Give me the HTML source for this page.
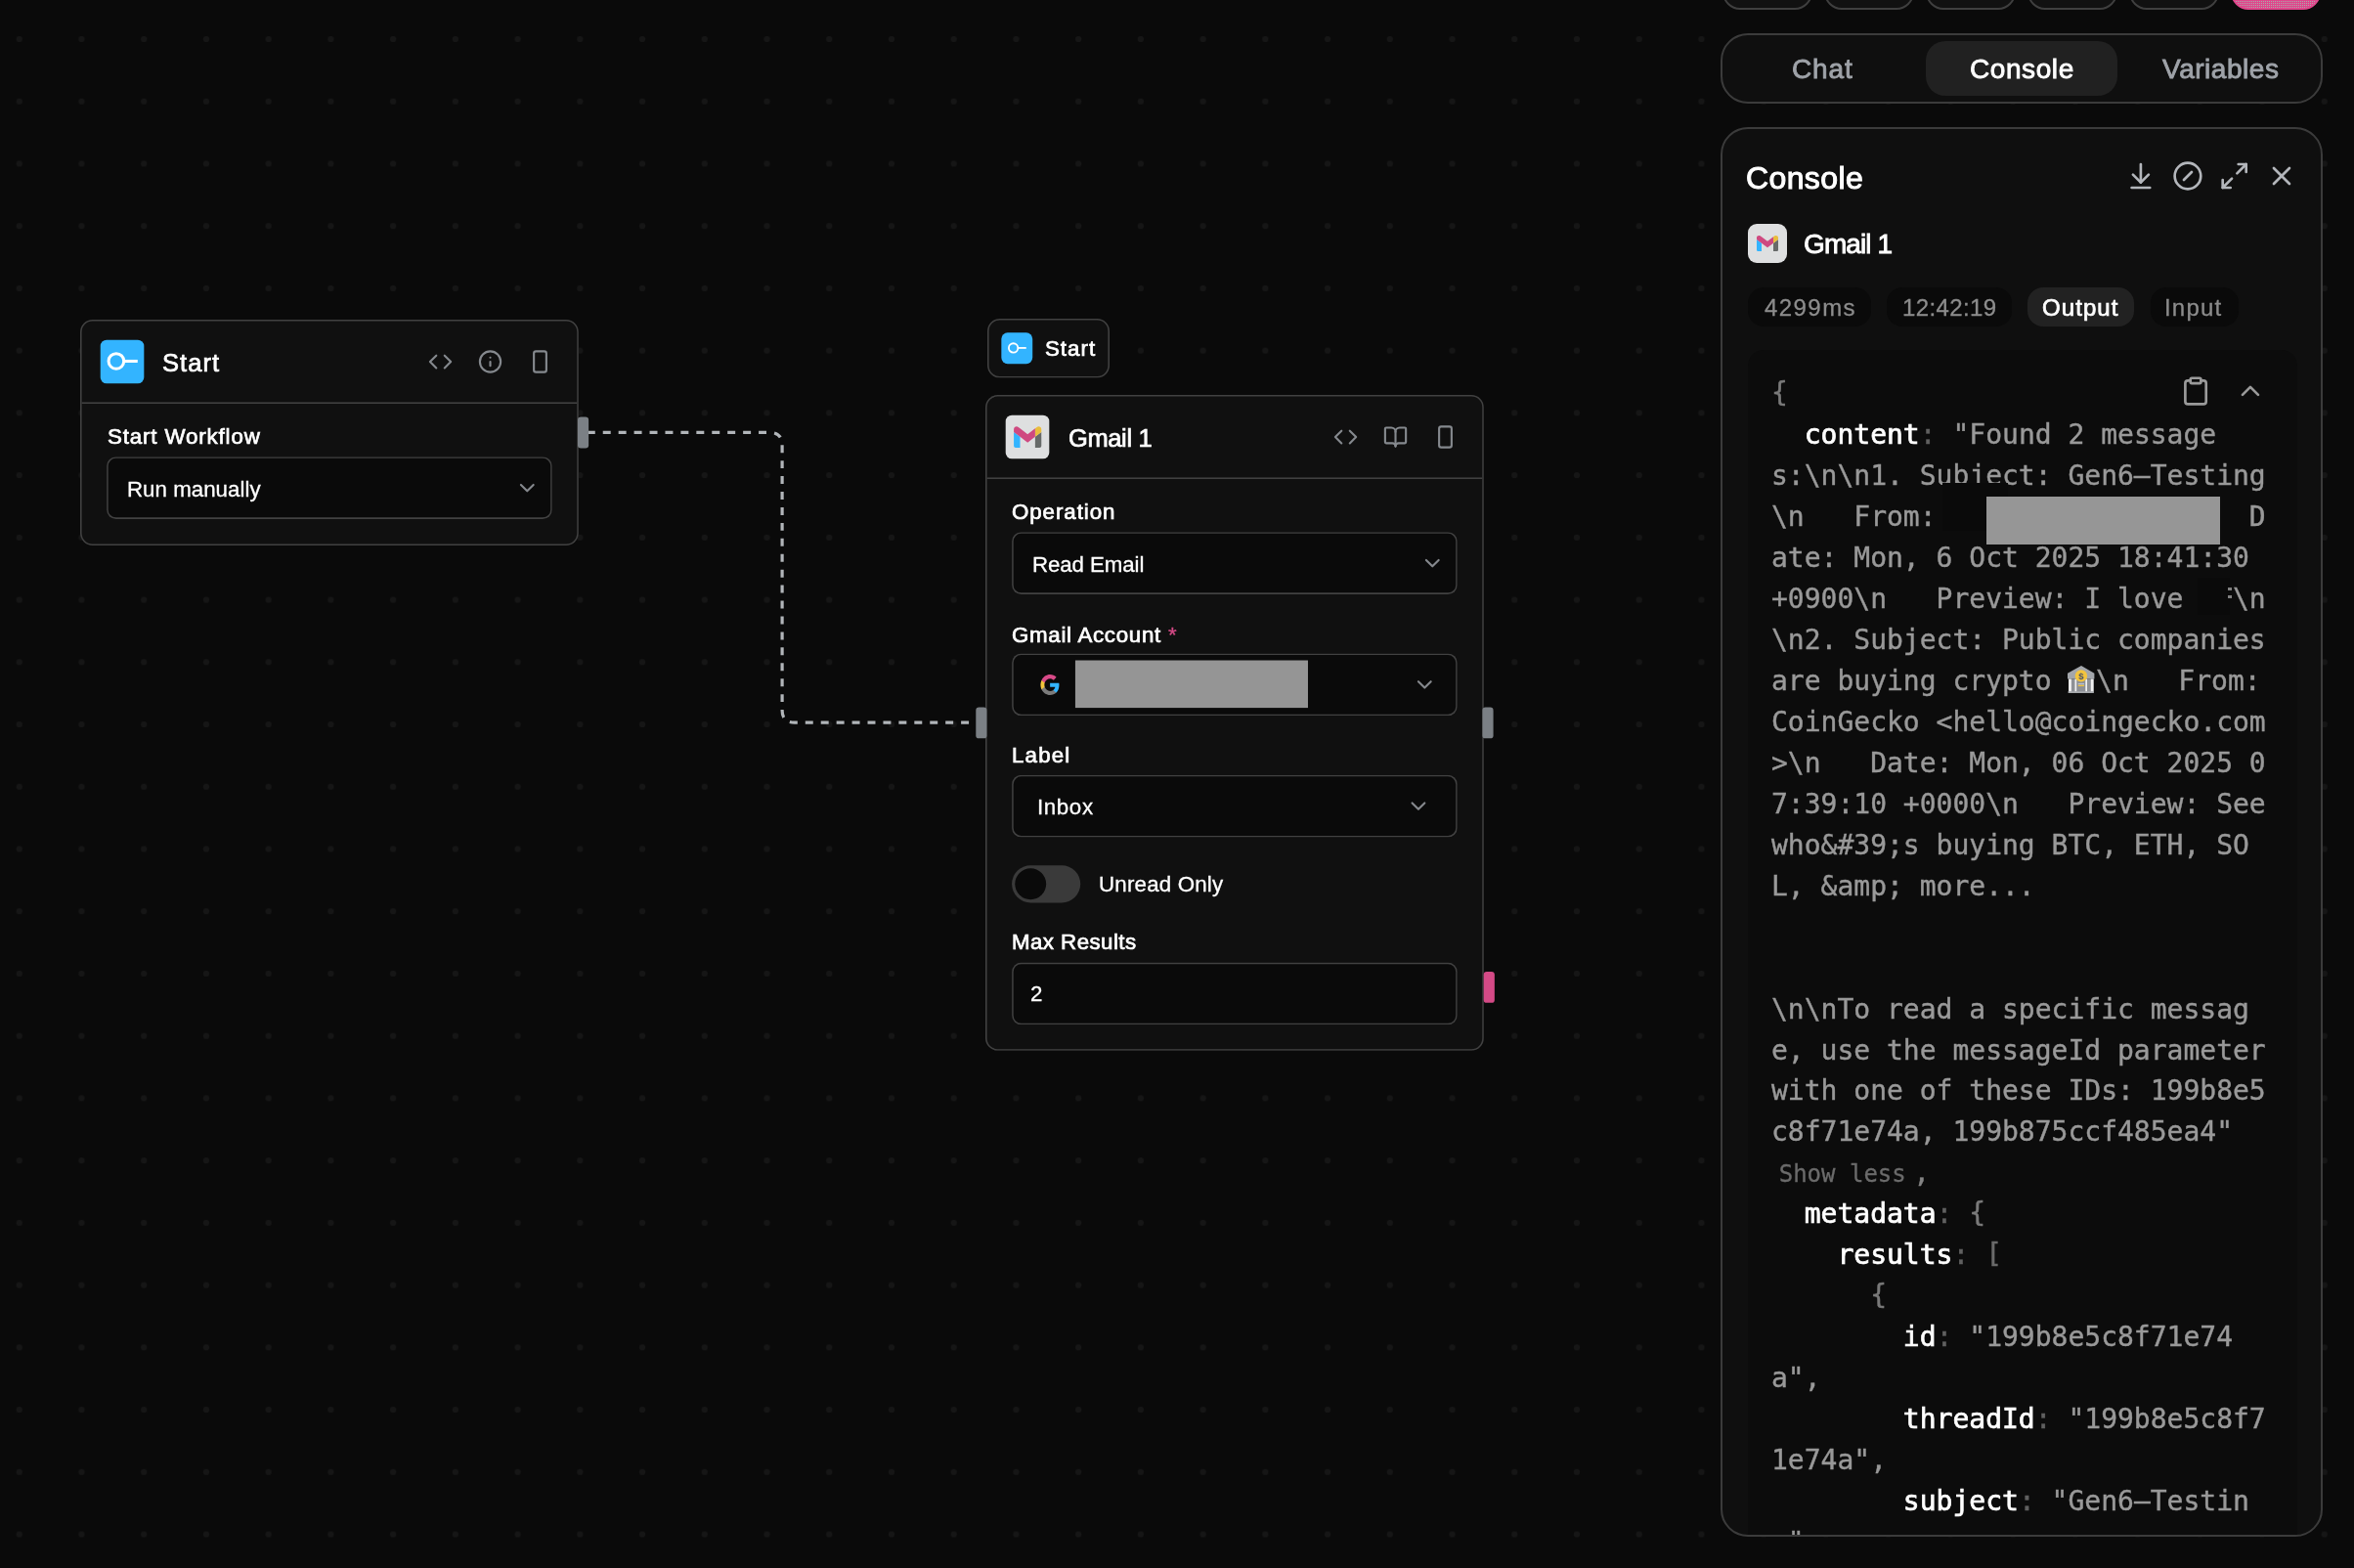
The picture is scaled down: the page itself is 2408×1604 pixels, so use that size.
<!DOCTYPE html>
<html lang="en"><head><meta charset="utf-8"><title>Workflow</title>
<style>
html,body{margin:0;padding:0;background:#0a0a0a;}
body{width:2408px;height:1604px;overflow:hidden;position:relative;font-family:"Liberation Sans", Arial, sans-serif;}
.t{position:absolute;white-space:pre;line-height:1;will-change:transform;font-family:"Liberation Sans", Arial, sans-serif;font-weight:400;}
.ic{position:absolute;overflow:visible}
.node{position:absolute;transform-origin:0 0;transform:scale(1.5933);}
.card{position:absolute;left:0;top:0;right:0;bottom:0;background:#101010;box-shadow:inset 0 0 0 1px #414141;}
.ibox{position:absolute;border-radius:4px;}
.divider{position:absolute;left:1px;right:1px;top:53px;height:1px;background:#414141;}
.sel{position:absolute;width:286px;border-radius:6px;background:#0a0a0a;box-shadow:inset 0 0 0 1px #414141;}
.handle{position:absolute;width:7px;height:20px;border-radius:2px;background:#7b8085;}
.toggle{position:absolute;left:17px;top:302px;width:44px;height:24px;border-radius:12px;background:#3a3a3a;}
.knob{position:absolute;left:2px;top:2px;width:20px;height:20px;border-radius:10px;background:#0a0a0a;}
.tbtn{position:absolute;top:-78px;width:91.5px;height:88px;box-sizing:border-box;border:2px solid #3f3f3f;border-radius:18px;background:#111111;}
.dith{position:absolute;left:0;right:0;top:0;bottom:0;border-radius:15px;background-color:#aaaaaa;background-image:linear-gradient(to right,#e0468c 50%,transparent 50%),linear-gradient(to bottom,#e0468c 50%,transparent 50%);background-size:2px 2px;}
.tabs{position:absolute;left:1760px;top:34px;width:616px;height:72px;box-sizing:border-box;border:2px solid #3b3b3b;border-radius:28px;background:#0f0f0f;}
.tabact{position:absolute;left:1970px;top:42px;width:196px;height:56px;border-radius:20px;background:#212121;}
.panel{position:absolute;left:1760px;top:130px;width:616px;height:1442px;box-sizing:border-box;border:2px solid #3b3b3b;border-radius:28px;background:#0f0f0f;overflow:hidden;}
.panel > *{margin:-2px 0 0 -2px;}
.pill{position:absolute;top:164px;height:40px;border-radius:16px;background:#0a0a0a;}
.codeblk{position:absolute;left:28px;top:228px;width:562px;height:1300px;border-radius:16px;background:#0c0c0c;font-family:"DejaVu Sans Mono", "Liberation Mono", monospace;font-size:28px;color:#999;-webkit-text-stroke:0.4px #999;}
.ln{will-change:transform;position:absolute;left:23.6px;height:42px;line-height:42px;white-space:pre;}
.k{color:#fff;-webkit-text-stroke:0.7px #fff;}
.c{color:#606060;-webkit-text-stroke:0.4px #606060;}
.b{color:#7a7a7a;-webkit-text-stroke:0.4px #7a7a7a;position:relative;top:-1.4px;}
.b2{color:#6a6a6a;-webkit-text-stroke:0.4px #6a6a6a;position:relative;top:-1.4px;}
.sl{font-size:24px;color:#6b6b6b;-webkit-text-stroke:0.3px #6b6b6b;margin-left:7.7px;}
.slc{color:#858585;-webkit-text-stroke:0.4px #858585;margin-left:7.5px;}
.emo{display:inline-block;position:relative;width:28.6px;height:1px;}
</style></head>
<body>
<svg style="position:absolute;left:0;top:0" width="2408" height="1604"><defs><pattern id="dp" x="-12.115" y="8.135" width="63.73" height="63.73" patternUnits="userSpaceOnUse"><circle cx="31.865" cy="31.865" r="3.1" fill="#161616"/></pattern></defs><rect width="2408" height="1604" fill="url(#dp)"/></svg>
<svg style="position:absolute;left:0;top:0" width="2408" height="1604" fill="none"><path d="M600.8 442.45 L787.35 442.45 Q800.1 442.45 800.1 455.2 L800.1 726.45 Q800.1 739.2 812.85 739.2 L999 739.2" stroke="#b1b5b9" stroke-width="3.19" stroke-dasharray="7.9665 7.9665"/></svg>
<div class="node" style="left:82.15px;top:327.0px;width:320px;height:145px;"><div class="card" style="border-radius:8px;"></div><div class="ibox" style="left:13px;top:13px;width:28px;height:28px;background:#33b4ff"><svg class="ic" style="left:0;top:0;transform:translate(4.000px,4.000px);" width="20" height="20" viewBox="0 0 20 20" fill="none" stroke="#fff" stroke-width="1.9" stroke-linecap="butt"><circle cx="6.15" cy="9.65" r="4.9"/><path d="M11 9.65H19.9"/></svg></div><svg class="ic" style="left:0;top:0;transform:translate(223.300px,19.000px);" width="16" height="16" viewBox="0 0 24 24" fill="none" stroke="#85898e" stroke-width="2" stroke-linecap="round" stroke-linejoin="round"><polyline points="16 18 22 12 16 6"/><polyline points="8 6 2 12 8 18"/></svg><svg class="ic" style="left:0;top:0;transform:translate(255.300px,19.000px);" width="16" height="16" viewBox="0 0 24 24" fill="none" stroke="#85898e" stroke-width="2" stroke-linecap="round" stroke-linejoin="round"><circle cx="12" cy="12" r="10"/><path d="M12 16v-4"/><path d="M12 8h.01"/></svg><svg class="ic" style="left:0;top:0;transform:translate(287.300px,19.000px);" width="16" height="16" viewBox="0 0 24 24" fill="none" stroke="#85898e" stroke-width="2" stroke-linecap="round" stroke-linejoin="round"><rect width="12" height="20" x="6" y="2" rx="2"/></svg><div class="divider"></div><div class="sel" style="left:0;top:0;transform:translate(17.000px,88.000px);height:40px"></div><svg class="ic" style="left:0;top:0;transform:translate(279.000px,100.000px);" width="16" height="16" viewBox="0 0 24 24" fill="none" stroke="#85888d" stroke-width="2" stroke-linecap="round" stroke-linejoin="round"><path d="m6 9 6 6 6-6"/></svg><div class="handle" style="left:0;top:0;transform:translate(319.450px,62.500px);"></div></div>
<div class="node" style="left:1009.6px;top:325.9px;width:78.45px;height:38px;"><div class="card" style="border-radius:8px;width:79px;right:auto;transform-origin:0 0;transform:scaleX(0.99304);"></div><div class="ibox" style="left:9px;top:9px;width:20px;height:20px;background:#33b4ff"><svg class="ic" style="left:0;top:0;transform:translate(4.000px,4.000px);" width="12" height="12" viewBox="0 0 20 20" fill="none" stroke="#fff" stroke-width="1.9" stroke-linecap="butt"><circle cx="6.15" cy="9.65" r="4.9"/><path d="M11 9.65H19.9"/></svg></div></div>
<div class="node" style="left:1008.15px;top:403.8px;width:320px;height:421px;"><div class="card" style="border-radius:8px;"></div><div class="ibox" style="left:13px;top:13px;width:28px;height:28px;background:#dedfe0"><svg class="ic" style="left:0;top:0;transform:translate(5.250px,7.300px);" width="18" height="14" viewBox="0 0 18 14"><g transform="scale(0.20114,0.20606) translate(-52,-42)"><path fill="#33b4ff" d="M58 108h14V74L52 59v43c0 3.32 2.69 6 6 6"/><path fill="#676a69" d="M120 108h14c3.32 0 6-2.69 6-6V59l-20 15"/><path fill="#e9bd3d" d="M120 48v26l20-15v-8c0-7.42-8.47-11.65-14.4-7.2"/><path fill="#cf4980" d="M72 74V48l24 18 24-18v26L96 92zM52 51v8l20 15V48l-5.6-4.2c-5.94-4.45-14.4-.22-14.4 7.2z"/></g></svg></div><svg class="ic" style="left:0;top:0;transform:translate(223.300px,19.000px);" width="16" height="16" viewBox="0 0 24 24" fill="none" stroke="#85898e" stroke-width="2" stroke-linecap="round" stroke-linejoin="round"><polyline points="16 18 22 12 16 6"/><polyline points="8 6 2 12 8 18"/></svg><svg class="ic" style="left:0;top:0;transform:translate(255.300px,19.000px);" width="16" height="16" viewBox="0 0 24 24" fill="none" stroke="#85898e" stroke-width="2" stroke-linecap="round" stroke-linejoin="round"><path d="M12 7v14"/><path d="M3 18a1 1 0 0 1-1-1V4a1 1 0 0 1 1-1h5a4 4 0 0 1 4 4 4 4 0 0 1 4-4h5a1 1 0 0 1 1 1v13a1 1 0 0 1-1 1h-6a3 3 0 0 0-3 3 3 3 0 0 0-3-3z"/></svg><svg class="ic" style="left:0;top:0;transform:translate(287.300px,19.000px);" width="16" height="16" viewBox="0 0 24 24" fill="none" stroke="#85898e" stroke-width="2" stroke-linecap="round" stroke-linejoin="round"><rect width="12" height="20" x="6" y="2" rx="2"/></svg><div class="divider"></div><div class="sel" style="left:0;top:0;transform:translate(17.000px,88.000px);height:40px"></div><svg class="ic" style="left:0;top:0;transform:translate(279.000px,100.000px);" width="16" height="16" viewBox="0 0 24 24" fill="none" stroke="#85888d" stroke-width="2" stroke-linecap="round" stroke-linejoin="round"><path d="m6 9 6 6 6-6"/></svg><div class="sel" style="left:0;top:0;transform:translate(17.000px,166.000px);height:40px"></div><svg class="ic" style="left:0;top:0;transform:translate(274.000px,178.000px);" width="16" height="16" viewBox="0 0 24 24" fill="none" stroke="#85888d" stroke-width="2" stroke-linecap="round" stroke-linejoin="round"><path d="m6 9 6 6 6-6"/></svg><div class="sel" style="left:0;top:0;transform:translate(17.000px,244.000px);height:40px"></div><svg class="ic" style="left:0;top:0;transform:translate(270.000px,256.000px);" width="16" height="16" viewBox="0 0 24 24" fill="none" stroke="#85888d" stroke-width="2" stroke-linecap="round" stroke-linejoin="round"><path d="m6 9 6 6 6-6"/></svg><div class="sel" style="left:0;top:0;transform:translate(17.000px,364.400px);height:40px"></div><svg class="ic" style="left:0;top:0;transform:translate(34.840px,178.950px);" width="15" height="15" viewBox="0 0 15 15"><g transform="scale(0.55500,0.60000)"><path fill="#33b4ff" d="M22.56 12.25c0-.78-.07-1.53-.2-2.25H12v4.26h5.92c-.26 1.37-1.04 2.53-2.21 3.31v2.77h3.57c2.08-1.92 3.28-4.74 3.28-8.09z"/><path fill="#7b7b7b" d="M12 23c2.97 0 5.46-.98 7.28-2.66l-3.57-2.77c-.98.66-2.23 1.06-3.71 1.06-2.86 0-5.29-1.93-6.16-4.53H2.18v2.84C3.99 20.53 7.7 23 12 23z"/><path fill="#f2c53d" d="M5.84 14.09c-.22-.66-.35-1.36-.35-2.09s.13-1.43.35-2.09V7.07H2.18C1.43 8.55 1 10.22 1 12s.43 3.45 1.18 4.93l2.85-2.22.81-.62z"/><path fill="#d84a88" d="M12 5.38c1.62 0 3.06.56 4.21 1.64l3.15-3.15C17.45 2.09 14.97 1 12 1 7.7 1 3.99 3.47 2.18 7.07l3.66 2.84c.87-2.6 3.3-4.53 6.16-4.53z"/></g></svg><div style="position:absolute;left:0;top:0;width:150px;height:31px;transform-origin:0 0;transform:translate(57.700px,170.400px) scale(0.99600,0.98387);background:#959595"></div><div class="toggle"><div class="knob"></div></div><div class="handle" style="left:0;top:0;transform:translate(-6.100px,200.500px);"></div><div class="handle" style="left:0;top:0;transform:translate(319.100px,200.500px);"></div><div class="handle" style="left:0;top:0;transform:translate(319.900px,370.300px);background:#d44a86"></div></div>
<div class="tbtn" style="left:1762.0px"></div><div class="tbtn" style="left:1866.0px"></div><div class="tbtn" style="left:1970.1px"></div><div class="tbtn" style="left:2074.2px"></div><div class="tbtn" style="left:2178.2px"></div><div class="tbtn" style="left:2282.2px;background:#e0468c;border-color:#e0468c"><div class="dith"></div></div>
<div class="tabs"></div><div class="tabact"></div>
<div class="panel"><svg class="ic" style="left:0;top:0;transform:translate(413.900px,34.000px);" width="32" height="32" viewBox="0 0 24 24" fill="none" stroke="#b3b6bb" stroke-width="2" stroke-linecap="round" stroke-linejoin="round"><path d="M12 17V3"/><path d="m6 11 6 6 6-6"/><path d="M19 21H5"/></svg><svg class="ic" style="left:0;top:0;transform:translate(461.950px,34.000px);" width="32" height="32" viewBox="0 0 24 24" fill="none" stroke="#b3b6bb" stroke-width="2" stroke-linecap="round" stroke-linejoin="round"><circle cx="12" cy="12" r="10"/><path d="m9 15 6-6"/></svg><svg class="ic" style="left:0;top:0;transform:translate(509.700px,34.000px);" width="32" height="32" viewBox="0 0 24 24" fill="none" stroke="#b3b6bb" stroke-width="2" stroke-linecap="round" stroke-linejoin="round"><polyline points="15 3 21 3 21 9"/><polyline points="9 21 3 21 3 15"/><line x1="21" x2="14" y1="3" y2="10"/><line x1="3" x2="10" y1="21" y2="14"/></svg><svg class="ic" style="left:0;top:0;transform:translate(557.950px,34.000px);" width="32" height="32" viewBox="0 0 24 24" fill="none" stroke="#b3b6bb" stroke-width="2" stroke-linecap="round" stroke-linejoin="round"><path d="M18 6 6 18"/><path d="m6 6 12 12"/></svg><div class="ibox" style="left:28px;top:99px;width:40px;height:40px;border-radius:9px;background:#dedfe0"><svg class="ic" style="left:0;top:0;transform:translate(9.000px,11.900px);" width="22" height="17" viewBox="0 0 22 17"><g transform="scale(0.25000,0.24545) translate(-52,-42)"><path fill="#33b4ff" d="M58 108h14V74L52 59v43c0 3.32 2.69 6 6 6"/><path fill="#676a69" d="M120 108h14c3.32 0 6-2.69 6-6V59l-20 15"/><path fill="#e9bd3d" d="M120 48v26l20-15v-8c0-7.42-8.47-11.65-14.4-7.2"/><path fill="#cf4980" d="M72 74V48l24 18 24-18v26L96 92zM52 51v8l20 15V48l-5.6-4.2c-5.94-4.45-14.4-.22-14.4 7.2z"/></g></svg></div><div class="pill" style="left:28px;width:126px"></div><div class="pill" style="left:170px;width:128px"></div><div class="pill" style="left:314.3000000000002px;width:109px;background:#222"></div><div class="pill" style="left:440.3000000000002px;width:89.4px"></div><div class="codeblk"><div class="ln" style="top:23.7px"><span class="b">{</span></div><div class="ln" style="top:65.7px">  <span class="k">content</span><span class="c">:</span> "Found 2 message</div><div class="ln" style="top:107.7px">s:\n\n1. Subject: Gen6–Testing</div><div class="ln" style="top:149.7px">\n   From:                   D</div><div class="ln" style="top:191.6px">ate: Mon, 6 Oct 2025 18:41:30</div><div class="ln" style="top:233.6px">+0900\n   Preview: I love   \n</div><div class="ln" style="top:275.6px">\n2. Subject: Public companies</div><div class="ln" style="top:317.6px">are buying crypto <span class="emo"><svg width="27.4" height="27.9" viewBox="0 0 27.4 27.9" style="position:absolute;left:0;top:-23.7px"><path d="M0 7.7 L14 0 L27.4 7.7 V13.4 H0Z" fill="#a3a6ab"/><rect x="1" y="13.4" width="25.5" height="13" fill="#8e9196"/><rect x="1.1" y="13.6" width="2.8" height="12.9" fill="#f1f1f1"/><rect x="7.5" y="13.6" width="1.7" height="12.9" fill="#f1f1f1"/><rect x="18.3" y="13.6" width="1.7" height="12.9" fill="#f1f1f1"/><rect x="23.8" y="13.6" width="2.8" height="12.9" fill="#f1f1f1"/><rect x="0.6" y="26.2" width="26.3" height="1.7" fill="#b9bcc0"/><circle cx="13.9" cy="10.4" r="6.2" fill="#f2c43e"/><rect x="10.8" y="18" width="6.2" height="1.3" fill="#b9c3d4"/><rect x="10.8" y="19.75" width="6.2" height="1.3" fill="#f2c43e"/><text x="13.9" y="13.6" text-anchor="middle" font-family="Liberation Sans, Arial, sans-serif" font-weight="700" font-size="9.5" fill="#4c5468" stroke="none">$</text></svg></span>\n   From:</div><div class="ln" style="top:359.6px">CoinGecko &lt;hello@coingecko.com</div><div class="ln" style="top:401.6px">&gt;\n   Date: Mon, 06 Oct 2025 0</div><div class="ln" style="top:443.5px">7:39:10 +0000\n   Preview: See</div><div class="ln" style="top:485.5px">who&amp;#39;s buying BTC, ETH, SO</div><div class="ln" style="top:527.5px">L, &amp;amp; more...</div><div class="ln" style="top:569.5px"></div><div class="ln" style="top:611.5px"></div><div class="ln" style="top:653.5px">\n\nTo read a specific messag</div><div class="ln" style="top:695.5px">e, use the messageId parameter</div><div class="ln" style="top:737.4px">with one of these IDs: 199b8e5</div><div class="ln" style="top:779.4px">c8f71e74a, 199b875ccf485ea4"</div><div class="ln" style="top:821.4px"><span class="sl">Show less</span><span class="slc">,</span></div><div class="ln" style="top:863.4px">  <span class="k">metadata</span><span class="c">:</span> <span class="b">{</span></div><div class="ln" style="top:905.4px">    <span class="k">results</span><span class="c">:</span> <span class="b2">[</span></div><div class="ln" style="top:947.4px">      <span class="b">{</span></div><div class="ln" style="top:989.4px">        <span class="k">id</span><span class="c">:</span> "199b8e5c8f71e74</div><div class="ln" style="top:1031.3px">a",</div><div class="ln" style="top:1073.3px">        <span class="k">threadId</span><span class="c">:</span> "199b8e5c8f7</div><div class="ln" style="top:1115.3px">1e74a",</div><div class="ln" style="top:1157.3px">        <span class="k">subject</span><span class="c">:</span> "Gen6–Testin</div><div class="ln" style="top:1199.3px">g",</div><div style="position:absolute;left:199px;top:135.8px;width:67px;height:49.7px;background:#0a0a0a"></div><div style="position:absolute;left:459.6999999999998px;top:232.70000000000005px;width:33.2px;height:38.2px;background:#0a0a0a"></div><div style="position:absolute;left:244.29999999999995px;top:150.3px;width:239.1px;height:49.2px;background:#969696"></div><div style="position:absolute;left:491px;top:243px;width:4px;height:3px;background:#808080"></div><div style="position:absolute;left:491px;top:251px;width:4px;height:3px;background:#808080"></div><svg class="ic" style="left:0;top:0;transform:translate(442.050px,26.100px);" width="32" height="32" viewBox="0 0 24 24" fill="none" stroke="#9a9a9a" stroke-width="2" stroke-linecap="round" stroke-linejoin="round"><rect width="8" height="4" x="8" y="2" rx="1" ry="1"/><path d="M16 4h2a2 2 0 0 1 2 2v14a2 2 0 0 1-2 2H6a2 2 0 0 1-2-2V6a2 2 0 0 1 2-2h2"/></svg><svg class="ic" style="left:0;top:0;transform:translate(497.950px,25.900px);" width="32" height="32" viewBox="0 0 24 24" fill="none" stroke="#9a9a9a" stroke-width="2" stroke-linecap="round" stroke-linejoin="round"><path d="m18 15-6-6-6 6"/></svg></div></div>
<div class="t" id="st_title" style="left:166.40px;top:359.32px;font-size:25.49px;color:#fff;letter-spacing:1.088px;-webkit-text-stroke:0.7px #fff;">Start</div>
<div class="t" id="st_label" style="left:109.80px;top:435.98px;font-size:22.31px;color:#fff;letter-spacing:0.862px;-webkit-text-stroke:0.7px #fff;">Start Workflow</div>
<div class="t" id="st_sel" style="left:130.00px;top:490.12px;font-size:22.31px;color:#fff;letter-spacing:0.018px;-webkit-text-stroke:0.3px #fff;">Run manually</div>
<div class="t" id="bd_title" style="left:1068.60px;top:346.12px;font-size:22.31px;color:#fff;letter-spacing:1.000px;-webkit-text-stroke:0.7px #fff;">Start</div>
<div class="t" id="gm_title" style="left:1092.60px;top:436.32px;font-size:25.49px;color:#fff;letter-spacing:-0.367px;-webkit-text-stroke:0.7px #fff;">Gmail 1</div>
<div class="t" id="gm_l1" style="left:1034.80px;top:513.12px;font-size:22.31px;color:#fff;letter-spacing:0.938px;-webkit-text-stroke:0.7px #fff;">Operation</div>
<div class="t" id="gm_s1" style="left:1055.80px;top:566.62px;font-size:22.31px;color:#fff;letter-spacing:-0.100px;-webkit-text-stroke:0.3px #fff;">Read Email</div>
<div class="t" id="gm_l2" style="left:1034.80px;top:638.72px;font-size:22.31px;color:#fff;letter-spacing:0.708px;-webkit-text-stroke:0.7px #fff;">Gmail Account</div>
<div class="t" id="gm_ast" style="left:1194.90px;top:638.72px;font-size:22.31px;color:#d44a86;letter-spacing:0.000px;-webkit-text-stroke:0.3px #d44a86;">*</div>
<div class="t" id="gm_l3" style="left:1034.80px;top:762.42px;font-size:22.31px;color:#fff;letter-spacing:1.175px;-webkit-text-stroke:0.7px #fff;">Label</div>
<div class="t" id="gm_s3" style="left:1061.00px;top:814.82px;font-size:22.31px;color:#fff;letter-spacing:0.625px;-webkit-text-stroke:0.3px #fff;">Inbox</div>
<div class="t" id="gm_tg" style="left:1124.20px;top:893.92px;font-size:22.31px;color:#fff;letter-spacing:0.200px;-webkit-text-stroke:0.3px #fff;">Unread Only</div>
<div class="t" id="gm_l4" style="left:1035.20px;top:952.92px;font-size:22.31px;color:#fff;letter-spacing:0.450px;-webkit-text-stroke:0.7px #fff;">Max Results</div>
<div class="t" id="gm_in" style="left:1054.20px;top:1005.82px;font-size:22.31px;color:#fff;letter-spacing:0.000px;-webkit-text-stroke:0.3px #fff;">2</div>
<div class="t" id="tab1" style="left:1833.20px;top:57.40px;font-size:28.00px;color:#9fa3a9;letter-spacing:0.900px;-webkit-text-stroke:0.85px #9fa3a9;">Chat</div>
<div class="t" id="tab2" style="left:2014.60px;top:57.20px;font-size:28.00px;color:#fff;letter-spacing:0.583px;-webkit-text-stroke:0.85px #fff;">Console</div>
<div class="t" id="tab3" style="left:2212.00px;top:57.20px;font-size:28.00px;color:#9fa3a9;letter-spacing:0.537px;-webkit-text-stroke:0.85px #9fa3a9;">Variables</div>
<div class="t" id="c_title" style="left:1785.60px;top:166.11px;font-size:32.00px;color:#fff;letter-spacing:0.383px;-webkit-text-stroke:1.0px #fff;">Console</div>
<div class="t" id="c_gm" style="left:1844.60px;top:236.20px;font-size:28.00px;color:#fff;letter-spacing:-0.900px;-webkit-text-stroke:0.85px #fff;">Gmail 1</div>
<div class="t" id="p1" style="left:1805.00px;top:303.48px;font-size:24.00px;color:#8c8c8c;letter-spacing:1.440px;-webkit-text-stroke:0.3px #8c8c8c;">4299ms</div>
<div class="t" id="p2" style="left:1945.60px;top:303.48px;font-size:24.00px;color:#8c8c8c;letter-spacing:0.371px;-webkit-text-stroke:0.3px #8c8c8c;">12:42:19</div>
<div class="t" id="p3" style="left:2089.00px;top:303.48px;font-size:24.00px;color:#fff;letter-spacing:1.080px;-webkit-text-stroke:0.7px #fff;">Output</div>
<div class="t" id="p4" style="left:2214.40px;top:303.48px;font-size:24.00px;color:#8c8c8c;letter-spacing:1.200px;-webkit-text-stroke:0.3px #8c8c8c;">Input</div>
</body></html>
